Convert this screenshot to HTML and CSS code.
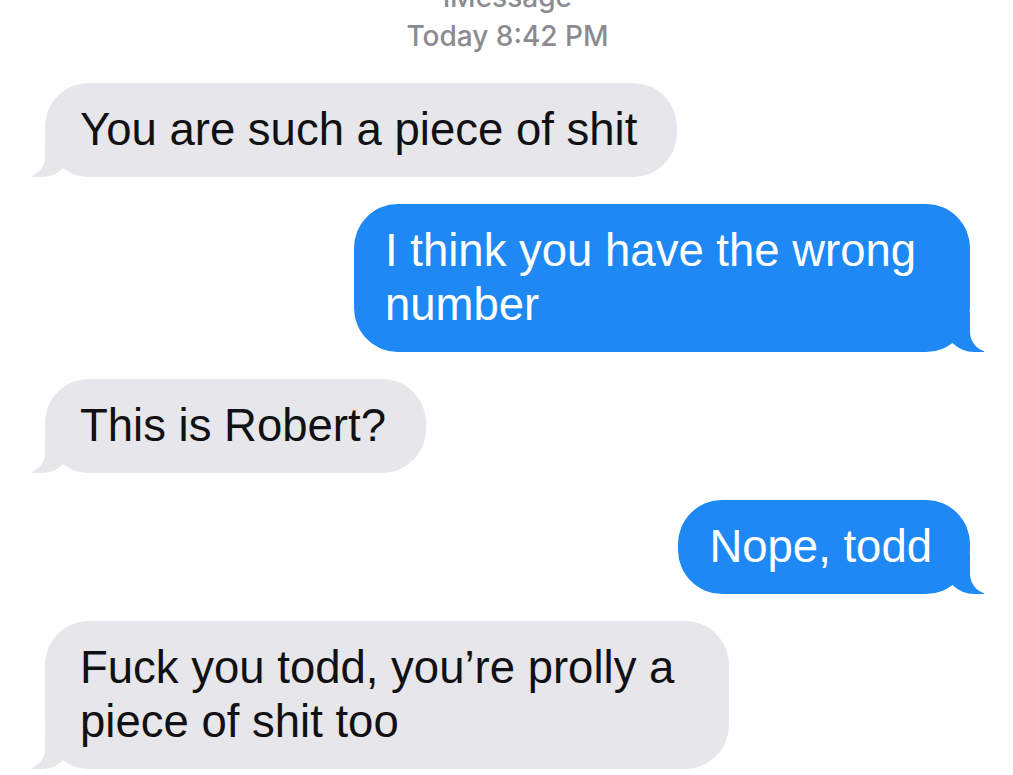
FILE: index.html
```html
<!DOCTYPE html>
<html lang="en">
<head>
<meta charset="utf-8">
<title>iMessage</title>
<link rel="stylesheet" href="styles.css">
</head>
<body>
<main class="thread">
  <header class="stamp">
    <div class="service">iMessage</div>
    <div class="time">Today 8:42 PM</div>
  </header>
  <div class="bubble them">You are such a piece of shit</div>
  <div class="bubble me">I think you have the wrong number</div>
  <div class="bubble them">This is Robert?</div>
  <div class="bubble me">Nope, todd</div>
  <div class="bubble them">Fuck you todd, you’re prolly a piece of shit too</div>
</main>
</body>
</html>
```

FILE: styles.css
```css
html, body {
  margin: 0;
  padding: 0;
  background: #ffffff;
  height: 100%;
  overflow: hidden;
}

.thread {
  display: flex;
  flex-direction: column;
  gap: 27px;
  padding: 0 43px 0 45px;
  font-family: "Liberation Sans", Arial, sans-serif;
}

.stamp {
  margin-top: -22px;
  text-align: center;
  color: #8b8b90;
  font-family: Inter, "Liberation Sans", Arial, sans-serif;
  font-size: 28px;
  line-height: 39px;
  font-weight: 500;
}

.bubble {
  position: relative;
  font-size: 45.5px;
  line-height: 54px;
  padding: 20px 40px 20px 35px;
  border-radius: 44px;
  box-sizing: border-box;
}

.them {
  align-self: flex-start;
  background: #e6e6eb;
  color: #111113;
  max-width: 684px;
}

.me {
  align-self: flex-end;
  background: #1e88f4;
  color: #ffffff;
  max-width: 616px;
  padding: 20px 38px 20px 31px;
}

.bubble::before,
.bubble::after {
  content: "";
  position: absolute;
  bottom: 0;
  height: 40px;
}

.them::before {
  left: -13px;
  width: 40px;
  background: #e6e6eb;
  border-bottom-right-radius: 30px;
}

.them::after {
  left: -22px;
  width: 22px;
  background: #ffffff;
  border-bottom-right-radius: 20px;
}

.me::before {
  right: -14px;
  width: 40px;
  background: #1e88f4;
  border-bottom-left-radius: 30px;
}

.me::after {
  right: -23px;
  width: 23px;
  background: #ffffff;
  border-bottom-left-radius: 20px;
}
```
